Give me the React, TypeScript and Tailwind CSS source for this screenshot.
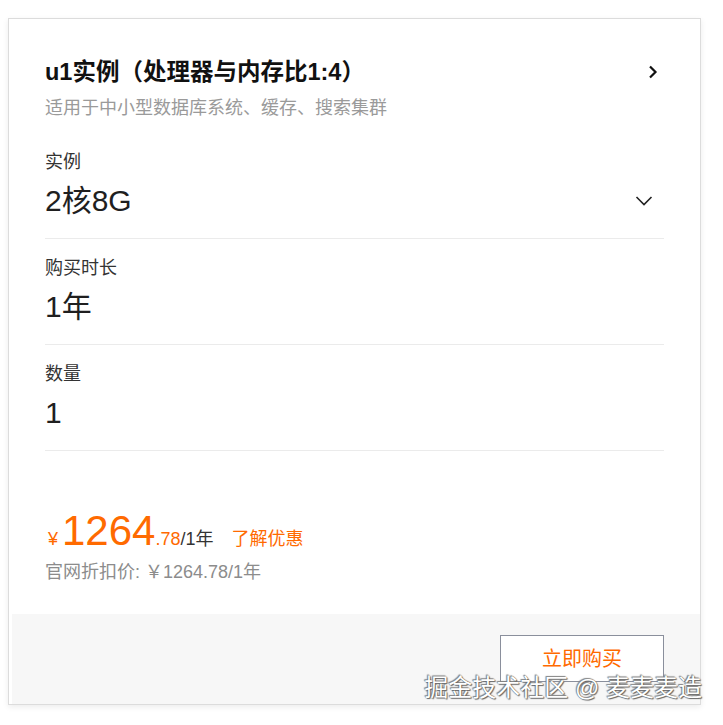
import React from "react";

const FONT = '"Liberation Sans", Arial, "Noto Sans CJK SC", sans-serif';

function Section({ label, value, chevron }: { label: string; value: string; chevron?: boolean }) {
  return (
    <div className="border-b border-[#ebebeb] pb-[17px]">
      <div className="h-[24px] text-[18px] leading-[24px] text-[#333]">{label}</div>
      <div className="mt-[7px] flex h-[40px] items-center justify-between">
        <span className="text-[30px] leading-[40px] text-[#1f1f1f]">{value}</span>
        {chevron && (
          <svg width="18" height="12" viewBox="0 0 18 12" className="mr-[11px]">
            <path d="M1.5 2 L9 9.5 L16.5 2" fill="none" stroke="#222" strokeWidth="1.6" />
          </svg>
        )}
      </div>
    </div>
  );
}

export default function App() {
  return (
    <div className="min-h-[725px] w-[723px] bg-white" style={{ fontFamily: FONT }}>
      <div className="relative ml-[8px] mt-[18px] flex h-[687px] w-[693px] flex-col border border-[#dcdcdc] bg-white shadow-[0_2px_6px_rgba(0,0,0,0.08)]">
        <div className="flex flex-1 flex-col px-[36px] pt-[38px]">
          <div className="flex h-[30px] items-center justify-between">
            <span className="text-[23.5px] font-bold leading-[30px] text-[#111]">u1实例（处理器与内存比1:4）</span>
            <svg width="12" height="16" viewBox="0 0 12 16" className="mr-[5px]">
              <path d="M3 2.5 L8.5 8 L3 13.5" fill="none" stroke="#111" strokeWidth="2.2" />
            </svg>
          </div>
          <div className="mt-[9px] h-[24px] text-[18px] leading-[24px] text-[#9a9a9a]">适用于中小型数据库系统、缓存、搜索集群</div>

          <div className="mt-[30px]">
            <div className="pt-0">
              <Section label="实例" value="2核8G" chevron />
            </div>
            <div className="pt-[17px]">
              <Section label="购买时长" value="1年" />
            </div>
            <div className="pt-[17px]">
              <Section label="数量" value="1" />
            </div>
          </div>

          <div className="mt-[55px] flex h-[50px] items-baseline">
            <span className="ml-[3px] text-[18px] text-[#ff6a00]">¥</span>
            <span className="ml-[4px] text-[42px] leading-[50px] text-[#ff6a00]">1264</span>
            <span className="text-[18px] text-[#ff6a00]">.78</span>
            <span className="text-[18px] text-[#333]">/1年</span>
            <span className="ml-[18px] text-[18px] text-[#ff6a00]">了解优惠</span>
          </div>
          <div className="mt-[4px] h-[24px] text-[18px] leading-[24px] text-[#8c8c8c]">官网折扣价: ￥1264.78/1年</div>
        </div>

        <div className="ml-[3px] flex h-[90px] justify-end bg-[#f7f7f7] pr-[36px] pt-[21px]">
          <div className="flex h-[47px] w-[164px] items-center justify-center border border-[#8a8f9c] bg-white text-[20px] text-[#ff6a00]">
            立即购买
          </div>
        </div>

        <div
          className="absolute bottom-[1px] right-[-2px] whitespace-nowrap text-[24px] leading-[30px] text-white"
          style={{ textShadow: "0 0 1px #555, 1px 1px 1px #666, -1px -1px 1px #888" }}
        >
          掘金技术社区 @ 麦麦麦造
        </div>
      </div>
    </div>
  );
}
